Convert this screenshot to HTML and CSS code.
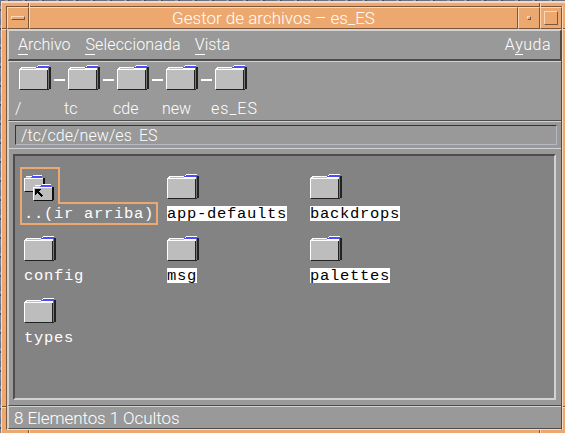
FILE: index.html
```html
<!DOCTYPE html>
<html lang="es">
<head>
<meta charset="utf-8">
<title>Gestor de archivos – es_ES</title>
<link rel="stylesheet" href="styles.css">
</head>
<body>
<svg width="0" height="0" class="defs" shape-rendering="crispEdges">
  <symbol id="folder" viewBox="0 0 32 25">
    <path fill="#222" d="M1 24h29v1H1zM28 4h1v20h-1zM30 2h2v22h-2z"/>
    <path fill="#777" d="M29 3h1v21h-1z"/>
    <path fill="#bdbdbd" d="M2 3h27v1H2z"/>
    <path fill="#4c4cff" d="M18 1h12v2H17v-1h1z"/>
    <path fill="#fff" d="M19 0h11v1H19zM18 1h1v1h-1zM2 2h15v1H2zM2 3h1v1H2z"/>
    <path fill="#fff" d="M0 4h29v1H0zM1 3h28v1H1zM0 4h1v20H0z"/>
    <path fill="#bdbdbd" d="M1 5h27v19H1zM3 3h14v1H3z"/>
    <path fill="#222" d="M28 5h1v19h-1z"/>
  </symbol>
  <symbol id="up" viewBox="0 0 32 27">
    <g id="mini"><path fill="#111" d="M1 16h19v1H1zM19 3h2v13h-2z"/><path fill="#4c4cff" d="M8 1h10v2H7z"/><path fill="#fff" d="M9 0h9v1H9zM2 1h6v1H2zM0 3h19v1H0zM0 3h1v13H0z"/><path fill="#bdbdbd" d="M2 2h5v1H2zM1 4h18v12H1z"/></g>
    <use href="#mini" x="9" y="9"/>
    <path fill="#000" d="M11 14h6v1h-1v1h-1v1h1v1h1v1h1v1h1v1h-1v1h-1v-1h-1v-1h-1v-1h-1v-1h-1v1h-1v1h-1z"/>
  </symbol>
</svg>
<div class="window">
  <header class="titlebar">
    <div class="cell"><i class="bar"></i></div>
    <h1 class="cell"><span class="t title">Gestor de archivos – es_ES</span></h1>
    <div class="cell"><i class="dot"></i></div>
    <div class="cell"><i class="square"></i></div>
  </header>
  <main class="client">
    <nav class="menu">
      <span class="t archivo"><u>A</u>rchivo</span>
      <span class="t selec"><u>S</u>eleccionada</span>
      <span class="t vista"><u>V</u>ista</span>
      <span class="t ayuda">A<u>y</u>uda</span>
    </nav>
    <section class="crumbs">
      <div class="crumb"><svg class="folder"><use href="#folder"/></svg><span class="t">/</span></div>
      <div class="crumb"><svg class="folder"><use href="#folder"/></svg><span class="t">tc</span></div>
      <div class="crumb"><svg class="folder"><use href="#folder"/></svg><span class="t">cde</span></div>
      <div class="crumb"><svg class="folder"><use href="#folder"/></svg><span class="t">new</span></div>
      <div class="crumb"><svg class="folder"><use href="#folder"/></svg><span class="t last">es_ES</span></div>
    </section>
    <section class="pathrow"><div class="path"><span class="t">/tc/cde/new/es<span class="faint">_</span>ES</span></div></section>
    <section class="view">
      <div class="files">
        <div class="file">
          <svg class="outline" viewBox="0 0 138 58"><path d="M1 1H39V36H137V57H1Z"/></svg>
          <svg class="upicon"><use href="#up"/></svg><span>..(ir arriba)</span>
        </div>
        <div class="file"><svg class="folder"><use href="#folder"/></svg><span class="link">app-defaults</span></div>
        <div class="file"><svg class="folder"><use href="#folder"/></svg><span class="link">backdrops</span></div>
        <div class="file"><svg class="folder"><use href="#folder"/></svg><span>config</span></div>
        <div class="file"><svg class="folder"><use href="#folder"/></svg><span class="link">msg</span></div>
        <div class="file"><svg class="folder"><use href="#folder"/></svg><span class="link">palettes</span></div>
        <div class="file"><svg class="folder"><use href="#folder"/></svg><span>types</span></div>
      </div>
    </section>
    <footer class="status"><span class="t stat">8 Elementos 1 Ocultos</span></footer>
  </main>
  <i class="notch tl"></i><i class="notch tr"></i><i class="notch bl"></i><i class="notch br"></i>
  <i class="notch side lt"></i><i class="notch side lb"></i><i class="notch side rt"></i><i class="notch side rb"></i>
</div>
</body>
</html>
```
FILE: styles.css
```css
:root {
  --orange: #eda870;
  --peach: #fbd8bc;
  --brown: #7b563a;
  --gray: #999;
  --light: #d2d2d2;
  --dark: #4d4d4d;
}
* { box-sizing: border-box; }
body {
  margin: 0;
  width: 565px;
  height: 433px;
  overflow: hidden;
  background:
    repeating-linear-gradient(90deg, transparent 0 5px, #9297a5 5px 8px, #4a4e5b 8px 10px, transparent 10px 17px),
    repeating-linear-gradient(#6d7384 0 6px, #8d93a2 6px 9px, #4a4e5b 9px 11px, #7b8294 11px 19px);
}
.defs { position: absolute; }
.window {
  position: relative;
  margin: 1px 0 0 1px;
  width: 570px;
  height: 440px;
  border: solid var(--peach);
  border-width: 2px 0 0 1px;
  background: var(--orange);
  padding: 3px 0 0 4px;
}
.titlebar {
  display: grid;
  grid-template-columns: 22px 489px 22px 22px;
  width: 556px;
  height: 23px;
  border-top: 1px solid var(--brown);
  border-left: 1px solid var(--brown);
  box-shadow: 1px 0 var(--peach);
}
.cell {
  display: flex;
  align-items: center;
  justify-content: center;
  margin: 0;
  border: 1px solid;
  border-color: var(--peach) var(--brown) var(--brown) var(--peach);
}
.cell i { border: 1px solid; border-color: var(--peach) var(--brown) var(--brown) var(--peach); }
.bar { width: 14px; height: 4px; }
.dot { width: 4px; height: 4px; }
.square { width: 14px; height: 14px; }
.client {
  display: flex;
  flex-direction: column;
  width: 556px;
  height: 401px;
  padding-left: 1px;
  border: 1px solid;
  border-color: var(--light) var(--dark) var(--peach) var(--brown);
  background: var(--gray);
  box-shadow: inset 1px 0 var(--light), 1px 0 var(--peach);
}
.t {
  font: 300 16px/18px Roboto, "Liberation Sans", sans-serif;
  color: #fff;
  white-space: pre;
}
.title, .stat { font-size: 17px; }
.stat { letter-spacing: -.08px; }
.menu {
  display: flex;
  height: 31px;
  padding: 5px 9px 0 9px;
  border: solid;
  border-width: 1px 1px 2px 1px;
  border-color: var(--light) var(--dark) var(--dark) var(--light);
}
.menu .t { height: 19px; }
.menu u { display: inline-block; height: 19px; border-bottom: 1px solid #fff; text-decoration: none; }
.selec { margin-left: 15px; letter-spacing: .15px; }
.vista { margin-left: 14px; }
.ayuda { margin-left: auto; letter-spacing: .5px; }
.crumbs {
  display: flex;
  gap: 17px;
  height: 60px;
  padding: 3px 0 0 10px;
  border: solid;
  border-width: 1px 0 1px 1px;
  border-color: var(--light) transparent var(--dark) var(--light);
}
.crumb {
  position: relative;
  display: flex;
  flex-direction: column;
  align-items: flex-start;
  gap: 10px;
  width: 32px;
}
.crumb .t { margin-left: -4px; }
.crumb + .crumb::before {
  content: "";
  position: absolute;
  left: -14px;
  top: 14px;
  width: 11px;
  height: 2px;
  background: #fff;
}
.folder { display: block; width: 32px; height: 25px; flex: none; }
.last { letter-spacing: 1px; }
.pathrow {
  height: 27px;
  padding: 3px 4px 0 6px;
  border-top: 1px solid var(--light);
  border-left: 1px solid var(--light);
}
.path {
  height: 20px;
  padding-left: 5px;
  border: 1px solid;
  border-color: #34343f #b5b8c5 #b5b8c5 #34343f;
}
.path .t { line-height: 20px; letter-spacing: .08px; }
.path .t.t { display: block; height: 18px; }
.path .faint { color: transparent; }
.view {
  flex: 1;
  padding: 5px 5px 5px 4px;
  border: solid;
  border-width: 1px 0 1px 1px;
  border-color: var(--light) transparent var(--dark) var(--light);
}
.files {
  display: grid;
  grid-template-columns: repeat(3, 143px);
  grid-auto-rows: 62px;
  height: 246px;
  padding: 18px 0 0 9px;
  border: 2px solid;
  border-color: var(--dark) var(--light) var(--light) var(--dark);
  background: #838383;
}
.file { position: relative; display: flex; flex-direction: column; align-items: flex-start; gap: 7px; }
.file span {
  height: 15px;
  font: 15.5px/17px "Liberation Mono", monospace;
  letter-spacing: .7px;
  color: #fff;
  white-space: pre;
}
.file .link { background: #fff; color: #000; }
.upicon { width: 32px; height: 27px; margin: 1px 0 -3px; flex: none; }
.outline { position: absolute; left: -4px; top: -7px; width: 138px; height: 58px; }
.outline path { fill: none; stroke: var(--orange); stroke-width: 2; }
.status {
  height: 23px;
  padding: 2px 0 0 5px;
  border: solid;
  border-width: 1px 0 1px 1px;
  border-color: var(--light) transparent var(--dark) var(--light);
}
.status .t { display: block; }
.notch { position: absolute; width: 2px; height: 4px; background: linear-gradient(90deg, var(--brown) 50%, var(--peach) 50%); }
.tl { left: 26px; top: 0; }
.tr { left: 537px; top: 0; }
.bl { left: 26px; top: 427px; }
.br { left: 537px; top: 427px; }
.side { width: 4px; height: 2px; background: linear-gradient(var(--brown) 50%, var(--peach) 50%); }
.lt { left: 0; top: 25px; }
.lb { left: 0; top: 403px; }
.rt { left: 561px; top: 25px; }
.rb { left: 561px; top: 403px; }
```
